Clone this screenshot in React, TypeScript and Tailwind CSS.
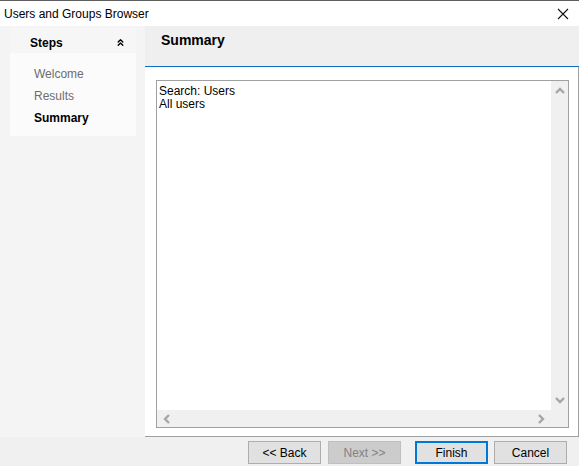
import { ChevronsUp } from 'lucide-react';

const font = { fontFamily: '"Liberation Sans", Arial, sans-serif' };

function Chevron({ dir }: { dir: 'up' | 'down' | 'left' | 'right' }) {
  const paths: Record<string, string> = {
    up: 'M1 6 L5 2 L9 6',
    down: 'M1 2 L5 6 L9 2',
    left: 'M6 1 L2 5 L6 9',
    right: 'M2 1 L6 5 L2 9',
  };
  const vertical = dir === 'up' || dir === 'down';
  return (
    <svg
      width={vertical ? 10 : 8}
      height={vertical ? 8 : 10}
      viewBox={vertical ? '0 0 10 8' : '0 0 8 10'}
      className="shrink-0"
    >
      <path d={paths[dir]} fill="none" stroke="#a6a6a6" strokeWidth="2.4" />
    </svg>
  );
}

function Button({
  label,
  disabled,
  primary,
}: {
  label: string;
  disabled?: boolean;
  primary?: boolean;
}) {
  return (
    <div
      className={
        'w-[73px] h-[23px] flex items-center justify-center text-[12px] ' +
        (disabled
          ? 'bg-[#cccccc] border border-[#bfbfbf] text-[#838383]'
          : primary
            ? 'bg-[#e1e1e1] border-2 border-[#0078d7] text-black'
            : 'bg-[#e1e1e1] border border-[#adadad] text-black')
      }
    >
      {label}
    </div>
  );
}

export default function App() {
  return (
    <div
      className="w-[579px] h-[466px] flex flex-col bg-[#f0f0f0] overflow-hidden select-none"
      style={font}
    >
      {/* title bar */}
      <div className="h-[26px] shrink-0 bg-white border-t border-[#5f5f5f] flex items-center justify-between pl-[4px] pr-[10px]">
        <span className="text-[12px] text-black">Users and Groups Browser</span>
        <svg width="12" height="12" viewBox="0 0 12 12">
          <path d="M1 1 L11 11 M11 1 L1 11" stroke="#111" strokeWidth="1.1" />
        </svg>
      </div>

      <div className="flex h-[411px] shrink-0">
        {/* steps panel */}
        <div className="w-[145px] shrink-0 bg-[#f4f4f4] pt-[2px] px-[10px] pr-[9px]">
          <div className="h-[25px] bg-[#f6f6f6] flex items-center justify-between pl-[20px] pr-[10px] pt-[4px]">
            <span className="text-[12px] font-bold text-black">Steps</span>
            <ChevronsUp size={11} strokeWidth={3} className="text-black" />
          </div>
          <div className="h-[83px] bg-[#fbfbfb] flex flex-col pl-[24px] pt-[15px] gap-[9px] text-[12px] leading-[13px]">
            <span className="text-[#6d6d6d]">Welcome</span>
            <span className="text-[#6d6d6d]">Results</span>
            <span className="font-bold text-black">Summary</span>
          </div>
        </div>

        {/* content */}
        <div className="flex-1 flex flex-col">
          <div className="h-[41px] shrink-0 bg-[#efefef] border-b border-[#0a6fc2] pl-[16px] pt-[2px]">
            <span className="text-[14px] font-bold text-black">Summary</span>
          </div>
          <div className="flex-1 bg-white border-r border-b border-[#a0a0a0] pl-[11px] pr-[9px] pt-[13px] pb-[8px] flex">
            <div className="flex-1 border border-[#a0a0a0] flex flex-col">
              <div className="flex-1 flex">
                <div className="flex-1 pl-[2px] pt-[4px] text-[12px] leading-[13px] text-black">
                  <div>Search: Users</div>
                  <div>All users</div>
                </div>
                <div className="w-[17px] bg-[#f0f0f0] flex flex-col items-center justify-between py-[6px]">
                  <Chevron dir="up" />
                  <Chevron dir="down" />
                </div>
              </div>
              <div className="h-[17px] shrink-0 flex">
                <div className="flex-1 bg-[#f0f0f0] flex items-center justify-between px-[6px]">
                  <Chevron dir="left" />
                  <Chevron dir="right" />
                </div>
                <div className="w-[17px] bg-[#f0f0f0]" />
              </div>
            </div>
          </div>
        </div>
      </div>

      {/* footer */}
      <div className="flex-1 flex justify-end items-start pt-[4px] pr-[12px]">
        <Button label="<< Back" />
        <div className="w-[7px]" />
        <Button label="Next >>" disabled />
        <div className="w-[14px]" />
        <Button label="Finish" primary />
        <div className="w-[6px]" />
        <Button label="Cancel" />
      </div>
    </div>
  );
}
